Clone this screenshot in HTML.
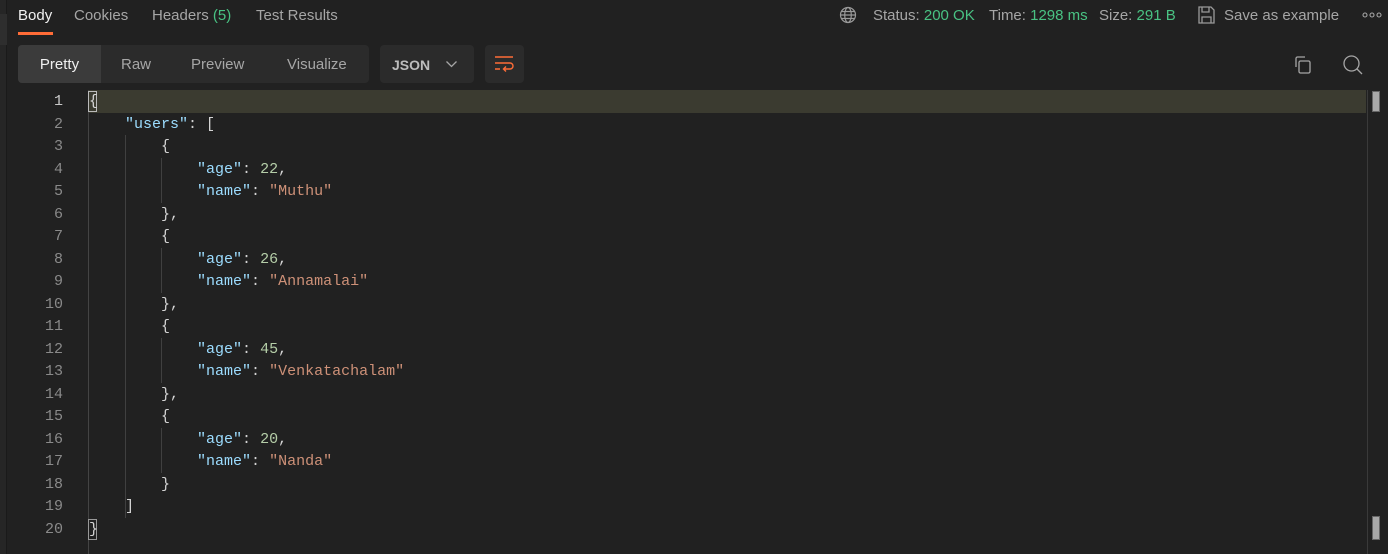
<!DOCTYPE html>
<html><head><meta charset="utf-8"><style>
*{margin:0;padding:0;box-sizing:border-box}
body{width:1388px;height:554px;background:#212121;font-family:"Liberation Sans",sans-serif;color:#a6a6a6;position:relative;overflow:hidden}
.abs{position:absolute}
.strip{left:0;top:0;width:7px;height:554px;background:#262626;border-right:1px solid #1a1a1a}
.tab{top:7px;font-size:15px;color:#a6a6a6;white-space:nowrap}
.g{color:#49c283}
.seg{left:18px;top:45px;width:351px;height:38px;background:#2b2b2b;border-radius:4px}
.seg div{position:absolute;top:0;height:38px;line-height:40px;font-size:15px;color:#a6a6a6}
.code{font-family:"Liberation Mono",monospace;font-size:15px;white-space:pre}
.ln{position:absolute;left:20px;width:43px;text-align:right;color:#8a8a8a;height:22.5px;line-height:24.5px}
.cl{position:absolute;left:89px;height:22.5px;line-height:24.5px;color:#ccc}
.k{color:#9cdcfe}.s{color:#ce9178}.n{color:#b5cea8}.p{color:#d4d4d4}
.guide{position:absolute;width:1px;background:#404040}
</style></head><body>
<div class="abs strip"></div>
<div class="abs" style="left:0;top:14px;width:7px;height:31px;background:#2e2e2e"></div>

<div class="abs tab" style="left:18px;color:#f0f0f0">Body</div>
<div class="abs" style="left:18px;top:32px;width:35px;height:3px;background:#ff6c37"></div>
<div class="abs tab" style="left:74px">Cookies</div>
<div class="abs tab" style="left:152px">Headers <span class="g">(5)</span></div>
<div class="abs tab" style="left:256px">Test Results</div>

<svg class="abs" style="left:839px;top:6px" width="18" height="18" viewBox="0 0 18 18" fill="none" stroke="#9a9a9a" stroke-width="1.2"><circle cx="9" cy="9" r="7.5"/><ellipse cx="9" cy="9" rx="3.3" ry="7.5"/><path d="M1.5 9h15M2.5 5.5h13M2.5 12.5h13"/></svg>
<div class="abs tab" style="left:873px">Status: <span class="g">200 OK</span></div>
<div class="abs tab" style="left:989px">Time: <span class="g">1298 ms</span></div>
<div class="abs tab" style="left:1099px">Size: <span class="g">291 B</span></div>
<svg class="abs" style="left:1197px;top:5px" width="19" height="20" viewBox="0 0 19 20" fill="none" stroke="#9a9a9a" stroke-width="1.3"><path d="M2 2h12l3 3v13H2z"/><path d="M5 2v5h7V2"/><path d="M5 18v-6h9v6"/></svg>
<div class="abs tab" style="left:1224px">Save as example</div>
<svg class="abs" style="left:1362px;top:11px" width="20" height="8" viewBox="0 0 20 8" fill="none" stroke="#a6a6a6" stroke-width="1.1"><circle cx="3" cy="4" r="2"/><circle cx="10" cy="4" r="2"/><circle cx="17" cy="4" r="2"/></svg>

<div class="abs seg">
<div style="left:0;width:83px;background:#3b3b3b;border-radius:4px 0 0 4px;text-align:center;color:#f0f0f0">Pretty</div>
<div style="left:103px">Raw</div>
<div style="left:173px">Preview</div>
<div style="left:269px">Visualize</div>
</div>
<div class="abs" style="left:380px;top:45px;width:94px;height:38px;background:#2b2b2b;border-radius:4px"></div>
<div class="abs" style="left:392px;top:57px;font-size:14px;font-weight:bold;color:#bdbdbd">JSON</div>
<svg class="abs" style="left:445px;top:60px" width="13" height="8" viewBox="0 0 13 8" fill="none" stroke="#a6a6a6" stroke-width="1.3"><path d="M1.5 1.5l5 5 5-5"/></svg>
<div class="abs" style="left:485px;top:45px;width:39px;height:38px;background:#2b2b2b;border-radius:4px"></div>
<svg class="abs" style="left:493px;top:55px" width="22" height="20" viewBox="0 0 22 20" fill="none" stroke="#ff6c37" stroke-width="1.4"><path d="M2 2h18M2 8h15a3 3 0 0 1 0 6h-6M13 11.5l-2.5 2.5 2.5 2.5M2 14h5"/></svg>

<svg class="abs" style="left:1293px;top:55px" width="20" height="20" viewBox="0 0 20 20" fill="none" stroke="#a6a6a6" stroke-width="1.3"><path d="M3 12V3.5A1.5 1.5 0 0 1 4.5 2H12"/><rect x="6" y="6" width="11" height="12" rx="1.5"/></svg>
<svg class="abs" style="left:1342px;top:54px" width="22" height="22" viewBox="0 0 22 22" fill="none" stroke="#a6a6a6" stroke-width="1.3"><circle cx="9.5" cy="9.5" r="7.5"/><path d="M15 15l5 5"/></svg>

<div class="abs" style="left:88px;top:90px;width:1278px;height:23px;background:#3b3b30"></div>
<div class="abs" style="left:88px;top:90px;width:1px;height:464px;background:#444"></div>
<div class="abs" style="left:1367px;top:90px;width:1px;height:464px;background:#3a3a3a"></div>
<div class="abs" style="left:1372px;top:91px;width:8px;height:21px;background:#a8a8a8;border:1px solid #666"></div>
<div class="abs" style="left:1372px;top:516px;width:8px;height:24px;background:#a8a8a8;border:1px solid #666"></div>
<div class="abs" style="left:88px;top:91px;width:9px;height:21px;border:1px solid #bbb"></div>
<div class="abs" style="left:88px;top:519px;width:9px;height:21px;border:1px solid #999"></div>

<div class="guide" style="left:125px;top:135px;height:383px"></div>
<div class="guide" style="left:161px;top:158px;height:45px"></div>
<div class="guide" style="left:161px;top:248px;height:45px"></div>
<div class="guide" style="left:161px;top:338px;height:45px"></div>
<div class="guide" style="left:161px;top:428px;height:45px"></div>

<div class="code">
<div class="ln" style="top:90px;color:#c8c8c8">1</div><div class="cl" style="top:90px"><span class="p">{</span></div>
<div class="ln" style="top:112.5px">2</div><div class="cl" style="top:112.5px">    <span class="k">"users"</span><span class="p">: [</span></div>
<div class="ln" style="top:135px">3</div><div class="cl" style="top:135px">        <span class="p">{</span></div>
<div class="ln" style="top:157.5px">4</div><div class="cl" style="top:157.5px">            <span class="k">"age"</span><span class="p">: </span><span class="n">22</span><span class="p">,</span></div>
<div class="ln" style="top:180px">5</div><div class="cl" style="top:180px">            <span class="k">"name"</span><span class="p">: </span><span class="s">"Muthu"</span></div>
<div class="ln" style="top:202.5px">6</div><div class="cl" style="top:202.5px">        <span class="p">},</span></div>
<div class="ln" style="top:225px">7</div><div class="cl" style="top:225px">        <span class="p">{</span></div>
<div class="ln" style="top:247.5px">8</div><div class="cl" style="top:247.5px">            <span class="k">"age"</span><span class="p">: </span><span class="n">26</span><span class="p">,</span></div>
<div class="ln" style="top:270px">9</div><div class="cl" style="top:270px">            <span class="k">"name"</span><span class="p">: </span><span class="s">"Annamalai"</span></div>
<div class="ln" style="top:292.5px">10</div><div class="cl" style="top:292.5px">        <span class="p">},</span></div>
<div class="ln" style="top:315px">11</div><div class="cl" style="top:315px">        <span class="p">{</span></div>
<div class="ln" style="top:337.5px">12</div><div class="cl" style="top:337.5px">            <span class="k">"age"</span><span class="p">: </span><span class="n">45</span><span class="p">,</span></div>
<div class="ln" style="top:360px">13</div><div class="cl" style="top:360px">            <span class="k">"name"</span><span class="p">: </span><span class="s">"Venkatachalam"</span></div>
<div class="ln" style="top:382.5px">14</div><div class="cl" style="top:382.5px">        <span class="p">},</span></div>
<div class="ln" style="top:405px">15</div><div class="cl" style="top:405px">        <span class="p">{</span></div>
<div class="ln" style="top:427.5px">16</div><div class="cl" style="top:427.5px">            <span class="k">"age"</span><span class="p">: </span><span class="n">20</span><span class="p">,</span></div>
<div class="ln" style="top:450px">17</div><div class="cl" style="top:450px">            <span class="k">"name"</span><span class="p">: </span><span class="s">"Nanda"</span></div>
<div class="ln" style="top:472.5px">18</div><div class="cl" style="top:472.5px">        <span class="p">}</span></div>
<div class="ln" style="top:495px">19</div><div class="cl" style="top:495px">    <span class="p">]</span></div>
<div class="ln" style="top:517.5px">20</div><div class="cl" style="top:517.5px"><span class="p">}</span></div>
</div>
</body></html>
